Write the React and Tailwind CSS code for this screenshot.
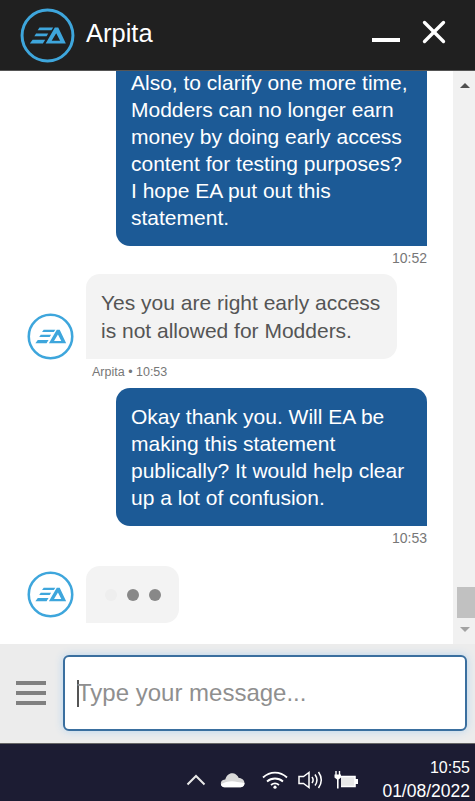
import { X } from 'lucide-react';

function EaLogo({ size, stroke, className }) {
    return (
        <svg width={size} height={size} viewBox="0 0 48 48" className={className}>
            <circle cx="24" cy="24" r="22.2" fill="none" stroke="#3ea6dc" strokeWidth={stroke} />
            <g fill="#3ea6dc">
                <path d="M17 17 H29 L27.4 19.4 H15.4 Z" />
                <path d="M14 22.2 H24.6 L23.2 24.6 H12.5 Z" />
                <path d="M11 27.6 H22 L20 31 H8.6 Z" />
                <path d="M30.4 17 H33.4 L40 31 H24.6 L26.2 28.6 H35 L31.6 22 L26.2 31 H22.4 Z" />
            </g>
        </svg>
    );
}

function MineBubble({ lines, time, className }) {
    return (
        <div className={`flex flex-col items-end ${className}`}>
            <div className="w-[311px] bg-[#1c5a96] text-white rounded-[14px] rounded-br-none px-[15px] pb-[15px] pt-[15px] text-[21px] leading-[27px]">
                {lines.map((line) => (
                    <div key={line}>{line}</div>
                ))}
            </div>
            <div className="mt-[5px] text-[14px] leading-[14px] text-[#777777]">{time}</div>
        </div>
    );
}

function TrayIcons() {
    return (
        <div className="flex items-center">
            {/* chevron */}
            <svg width="20" height="12" viewBox="0 0 20 12" fill="none" stroke="#e8e8e8" strokeWidth="2">
                <path d="M1.5 10.5 L10 2 L18.5 10.5" />
            </svg>
            {/* onedrive cloud */}
            <svg width="25" height="16" viewBox="0 0 26 16" className="ml-[14px]">
                <path d="M5 15.5 C1.5 15.5 0.5 12.5 1 10.5 C1.5 8.5 3.5 7.5 5.5 7.5 C6.5 3 10 0.5 13.5 1 C16.5 1.5 18.5 3.5 19.5 6 C23 6 25.5 8.5 25.5 11.5 C25.5 14 23.5 15.5 21.5 15.5 Z" fill="#d9d9d9" />
                <path d="M5 15.5 C2.5 15.5 1 14 1 12.5 C6 9.5 12 8.5 18 10 C21 10.5 23.5 10.5 25.5 11 C25.5 14 23.5 15.5 21.5 15.5 Z" fill="#ffffff" />
            </svg>
            {/* wifi */}
            <svg width="26" height="18" viewBox="0 0 26 18" fill="none" stroke="#ffffff" strokeWidth="1.8" className="ml-[17px]">
                <path d="M1 6.5 C8 0 18 0 25 6.5" />
                <path d="M5 10.5 C9.5 6.5 16.5 6.5 21 10.5" />
                <path d="M9 14 C11.5 12 14.5 12 17 14" />
                <circle cx="13" cy="16.2" r="1.6" fill="#ffffff" stroke="none" />
            </svg>
            {/* speaker */}
            <svg width="25" height="18" viewBox="0 0 25 18" fill="none" stroke="#ffffff" strokeWidth="1.5" className="ml-[10px]">
                <path d="M1 5.5 H5.5 L11 1.5 V16.5 L5.5 12.5 H1 Z" />
                <path d="M14 6 C15.5 8 15.5 10 14 12" />
                <path d="M17 3.5 C19.5 7 19.5 11 17 14.5" />
                <path d="M20.5 1 C24 6 24 12 20.5 17" />
            </svg>
            {/* battery with plug */}
            <svg width="25" height="18" viewBox="0 0 25 18" className="ml-[11px]">
                <path d="M2 0 V4 M5.5 0 V4" stroke="#ffffff" strokeWidth="1.4" />
                <path d="M0.5 3.5 H7 V6.5 L4.6 8.5 V17.5 H3 V8.5 L0.5 6.5 Z" fill="#ffffff" />
                <path d="M7 5.5 H21 V15.5 H7" fill="#e8e8e8" stroke="#ffffff" strokeWidth="1.6" />
                <rect x="21" y="8" width="3" height="5" fill="#ffffff" />
            </svg>
        </div>
    );
}

export default function App() {
    return (
        <div className="w-[475px] h-[801px] flex flex-col overflow-hidden bg-white font-['Liberation_Sans',Arial,sans-serif]">
            {/* Header */}
            <div className="h-[71px] shrink-0 bg-[#202020] flex items-center pl-[20px] pr-[22px] border-b border-[#555555]">
                <EaLogo size={55} stroke={2.6} />
                <div className="ml-[11px] text-[25.5px] leading-none text-white -mt-[3px]">Arpita</div>
                <div className="ml-auto w-[28px] h-[4px] mt-[10px] bg-white" />
                <X size={38} strokeWidth={2.1} color="#ffffff" className="ml-[15px] -mt-[7px]" />
            </div>

            {/* Messages + scrollbar */}
            <div className="h-[573px] shrink-0 flex">
                <div className="flex-1 min-w-0 overflow-hidden pl-[27px] pr-[26px] flex flex-col">
                    <MineBubble
                        className="-mt-[17px] shrink-0"
                        time="10:52"
                        lines={[
                            'Also, to clarify one more time,',
                            'Modders can no longer earn',
                            'money by doing early access',
                            'content for testing purposes?',
                            'I hope EA put out this',
                            'statement.',
                        ]}
                    />

                    {/* Agent reply */}
                    <div className="mt-[9px] flex items-end shrink-0">
                        <EaLogo size={47} stroke={2.6} className="mb-[-1px]" />
                        <div className="ml-[12px] w-[311px] bg-[#f3f3f3] text-[#555555] rounded-[14px] rounded-bl-none pl-[15px] pt-[15px] pb-[14px] text-[21px] leading-[28px]">
                            <div>Yes you are right early access</div>
                            <div>is not allowed for Modders.</div>
                        </div>
                    </div>
                    <div className="mt-[6px] ml-[65px] text-[12.5px] leading-[14px] text-[#777777] shrink-0">Arpita • 10:53</div>

                    <MineBubble
                        className="mt-[9px] shrink-0"
                        time="10:53"
                        lines={[
                            'Okay thank you. Will EA be',
                            'making this statement',
                            'publically? It would help clear',
                            'up a lot of confusion.',
                        ]}
                    />

                    {/* Typing indicator */}
                    <div className="mt-[21px] flex items-center shrink-0">
                        <EaLogo size={47} stroke={2.6} />
                        <div className="ml-[12px] w-[93px] h-[57px] bg-[#f3f3f3] rounded-[14px] rounded-bl-none flex items-center pl-[19px] gap-[10px]">
                            <div className="w-[12px] h-[12px] rounded-full bg-[#eeeeee]" />
                            <div className="w-[12px] h-[12px] rounded-full bg-[#888888]" />
                            <div className="w-[12px] h-[12px] rounded-full bg-[#888888]" />
                        </div>
                    </div>
                </div>
                <div className="w-[22px] bg-[#f1f1f1] flex flex-col items-end">
                    <div className="mt-[12px] mr-[5px] w-0 h-0 border-x-[5px] border-x-transparent border-b-[5px] border-b-[#505050]" />
                    <div className="mt-auto w-[18px] h-[31px] bg-[#c1c1c1]" />
                    <div className="mt-[9px] mb-[12px] mr-[5px] w-0 h-0 border-x-[5px] border-x-transparent border-t-[5px] border-t-[#a3a3a3]" />
                </div>
            </div>

            {/* Input bar */}
            <div className="h-[100px] shrink-0 bg-[#ececec] flex items-center pl-[16px] pr-[8px] pb-[1px] border-b border-[#666666]">
                <div className="w-[30px] h-[24px] flex flex-col justify-between">
                    <div className="h-[4px] bg-[#808080]" />
                    <div className="h-[4px] bg-[#808080]" />
                    <div className="h-[4px] bg-[#808080]" />
                </div>
                <div className="ml-[17px] flex-1 h-[76px] bg-white rounded-[6px] border-2 border-[#3a6f9f] shadow-[0_0_8px_#b5d4ee] flex items-center pl-[12px]">
                    <div className="w-[2px] h-[27px] bg-[#555555]" />
                    <div className="text-[24px] leading-none text-[#8f8f8f] -ml-[2px]">Type your message...</div>
                </div>
            </div>

            {/* Taskbar */}
            <div className="flex-1 min-h-0 bg-[#1c1c33] flex items-start pl-[186px] pr-[5px]">
                <div className="mt-[27px]">
                    <TrayIcons />
                </div>
                <div className="ml-auto mt-[14px] flex flex-col items-end gap-[3px] leading-[20px] text-white">
                    <div className="text-[16px]">10:55</div>
                    <div className="text-[17.5px]">01/08/2022</div>
                </div>
            </div>
        </div>
    );
}
